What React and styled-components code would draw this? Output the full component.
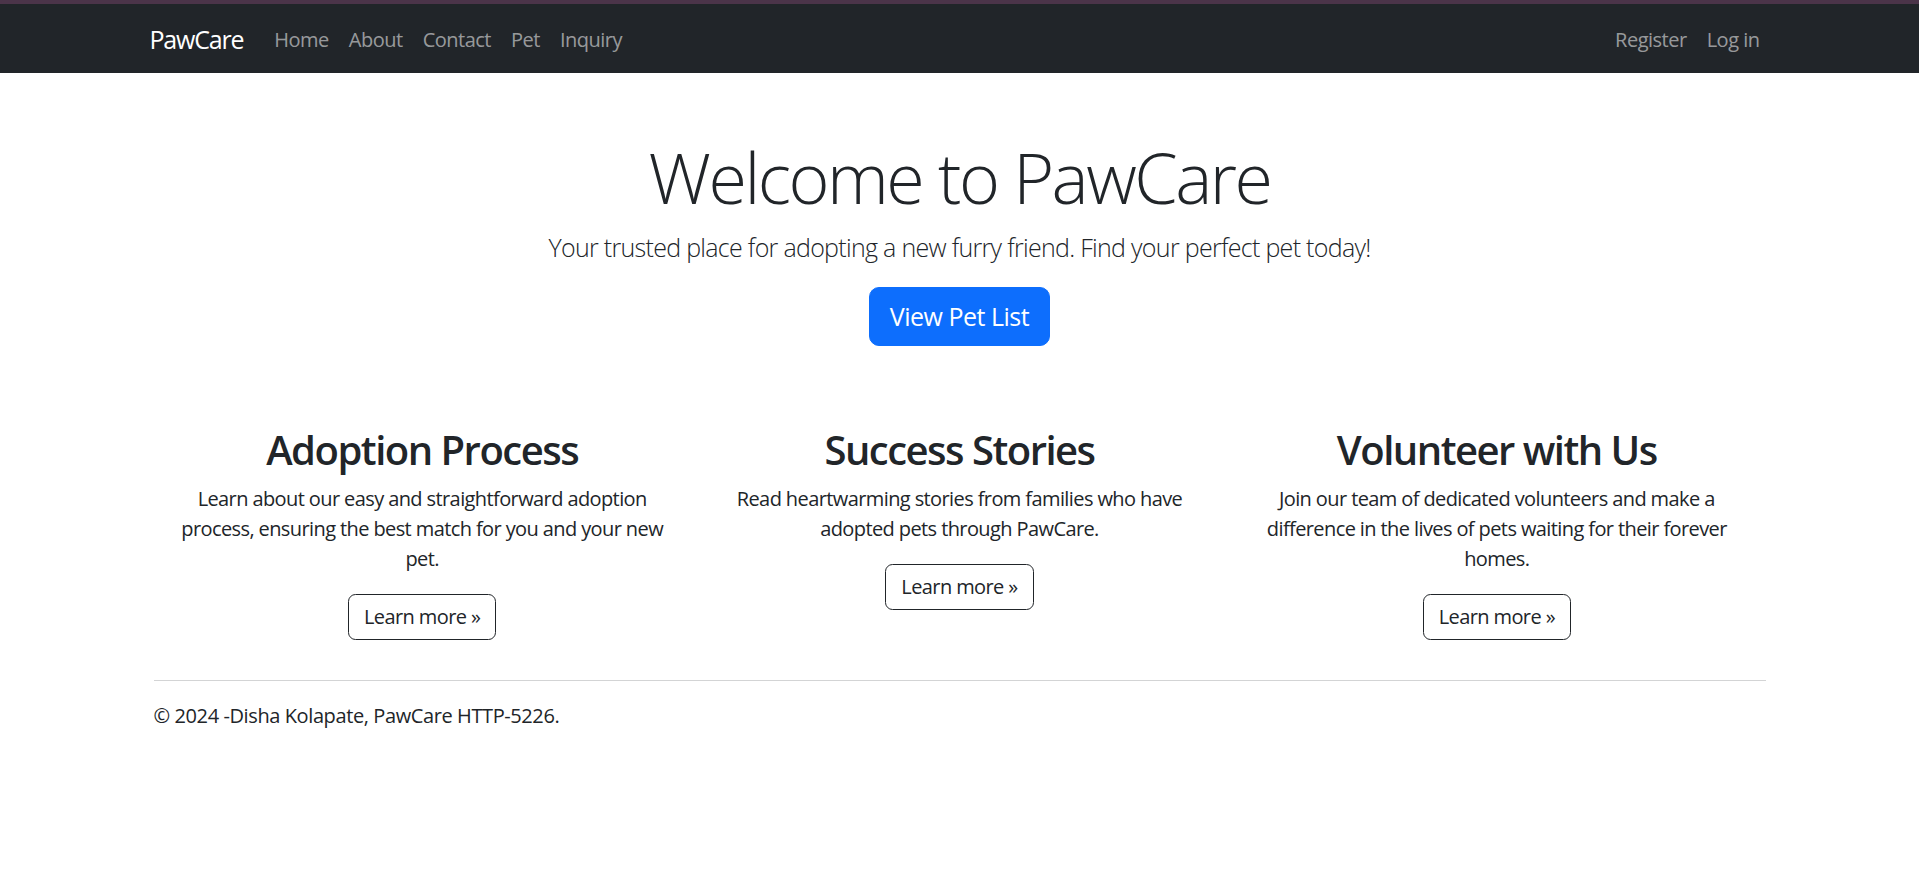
import React from "react";
import styled, { createGlobalStyle } from "styled-components";

const GlobalStyle = createGlobalStyle`
  html, body {
    margin: 0;
    padding: 0;
    background: #fff;
  }
  body {
    font-family: "Open Sans", "Noto Sans", sans-serif;
    font-size: 20px;
    line-height: 1.5;
    color: #212529;
  }
  * { box-sizing: border-box; }
`;

const TopBar = styled.header`
  border-top: 4px solid #4b3449;
  background: #212529;
  height: 73px;
`;

const NavContainer = styled.nav`
  max-width: 1650px;
  margin: 0 auto;
  padding: 3px 15px 0;
  height: 100%;
  display: flex;
  align-items: center;
`;

const Brand = styled.a`
  color: #fff;
  font-size: 25px;
  margin-right: 21px;
  text-decoration: none;
  letter-spacing: -1.2px;
`;

const NavList = styled.ul`
  display: flex;
  list-style: none;
  margin: 0;
  padding: 0;
  margin-left: ${(p) => (p.$end ? "auto" : "0")};
`;

const NavLink = styled.a`
  display: block;
  padding: 0 10px;
  color: rgba(255, 255, 255, 0.55);
  text-decoration: none;
  letter-spacing: -0.5px;
`;

const Main = styled.main`
  max-width: 1620px;
  margin: 0 auto;
  padding: 0 4px;
`;

const Hero = styled.section`
  display: flex;
  flex-direction: column;
  align-items: center;
  text-align: center;
  padding-top: 62px;
`;

const Title = styled.h1`
  font-size: 70px;
  font-weight: 300;
  line-height: 1.2;
  margin: 0 0 10px;
  letter-spacing: -2.5px;
`;

const Lead = styled.p`
  font-size: 25px;
  font-weight: 300;
  line-height: 1.5;
  margin: 0 0 20px;
  letter-spacing: -0.7px;
`;

const PrimaryButton = styled.a`
  display: inline-block;
  background: #0d6efd;
  color: #fff;
  border: 1px solid #0d6efd;
  border-radius: 10px;
  padding: 10px 20px;
  font-size: 25px;
  line-height: 1.5;
  letter-spacing: -0.5px;
  text-decoration: none;
`;

const Features = styled.div`
  display: grid;
  grid-template-columns: repeat(3, 1fr);
  margin-top: 80px;
`;

const Feature = styled.div`
  padding: 0 15px;
  text-align: center;
`;

const FeatureTitle = styled.h2`
  font-size: 40px;
  font-weight: 600;
  line-height: 1.2;
  margin: 0 0 10px;
  letter-spacing: -1.5px;
`;

const FeatureText = styled.p`
  margin: 0 0 20px;
  letter-spacing: -0.6px;
`;

const ButtonRow = styled.p`
  margin: 0 0 20px;
`;

const OutlineButton = styled.a`
  display: inline-block;
  color: #212529;
  border: 1px solid #212529;
  border-radius: 7.5px;
  padding: 7px 15px;
  text-decoration: none;
  letter-spacing: -0.6px;
`;

const Rule = styled.hr`
  border: 0;
  border-top: 1px solid #d3d4d5;
  margin: 20px 0;
`;

const Footer = styled.footer`
  letter-spacing: -0.4px;

  p {
    margin: 0 0 20px;
  }
`;

const features = [
  {
    title: "Adoption Process",
    text: "Learn about our easy and straightforward adoption process, ensuring the best match for you and your new pet.",
  },
  {
    title: "Success Stories",
    text: "Read heartwarming stories from families who have adopted pets through PawCare.",
  },
  {
    title: "Volunteer with Us",
    text: "Join our team of dedicated volunteers and make a difference in the lives of pets waiting for their forever homes.",
  },
];

export default function App() {
  return (
    <>
      <GlobalStyle />
      <TopBar>
        <NavContainer>
          <Brand href="#">PawCare</Brand>
          <NavList>
            {["Home", "About", "Contact", "Pet", "Inquiry"].map((item) => (
              <li key={item}>
                <NavLink href="#">{item}</NavLink>
              </li>
            ))}
          </NavList>
          <NavList $end>
            <li><NavLink href="#">Register</NavLink></li>
            <li><NavLink href="#">Log in</NavLink></li>
          </NavList>
        </NavContainer>
      </TopBar>
      <Main>
        <Hero>
          <Title>Welcome to PawCare</Title>
          <Lead>Your trusted place for adopting a new furry friend. Find your perfect pet today!</Lead>
          <PrimaryButton href="#">View Pet List</PrimaryButton>
        </Hero>
        <Features>
          {features.map((f) => (
            <Feature key={f.title}>
              <FeatureTitle>{f.title}</FeatureTitle>
              <FeatureText>{f.text}</FeatureText>
              <ButtonRow>
                <OutlineButton href="#">Learn more &raquo;</OutlineButton>
              </ButtonRow>
            </Feature>
          ))}
        </Features>
        <Rule />
        <Footer>
          <p>&copy; 2024 -Disha Kolapate, PawCare HTTP-5226.</p>
        </Footer>
      </Main>
    </>
  );
}
